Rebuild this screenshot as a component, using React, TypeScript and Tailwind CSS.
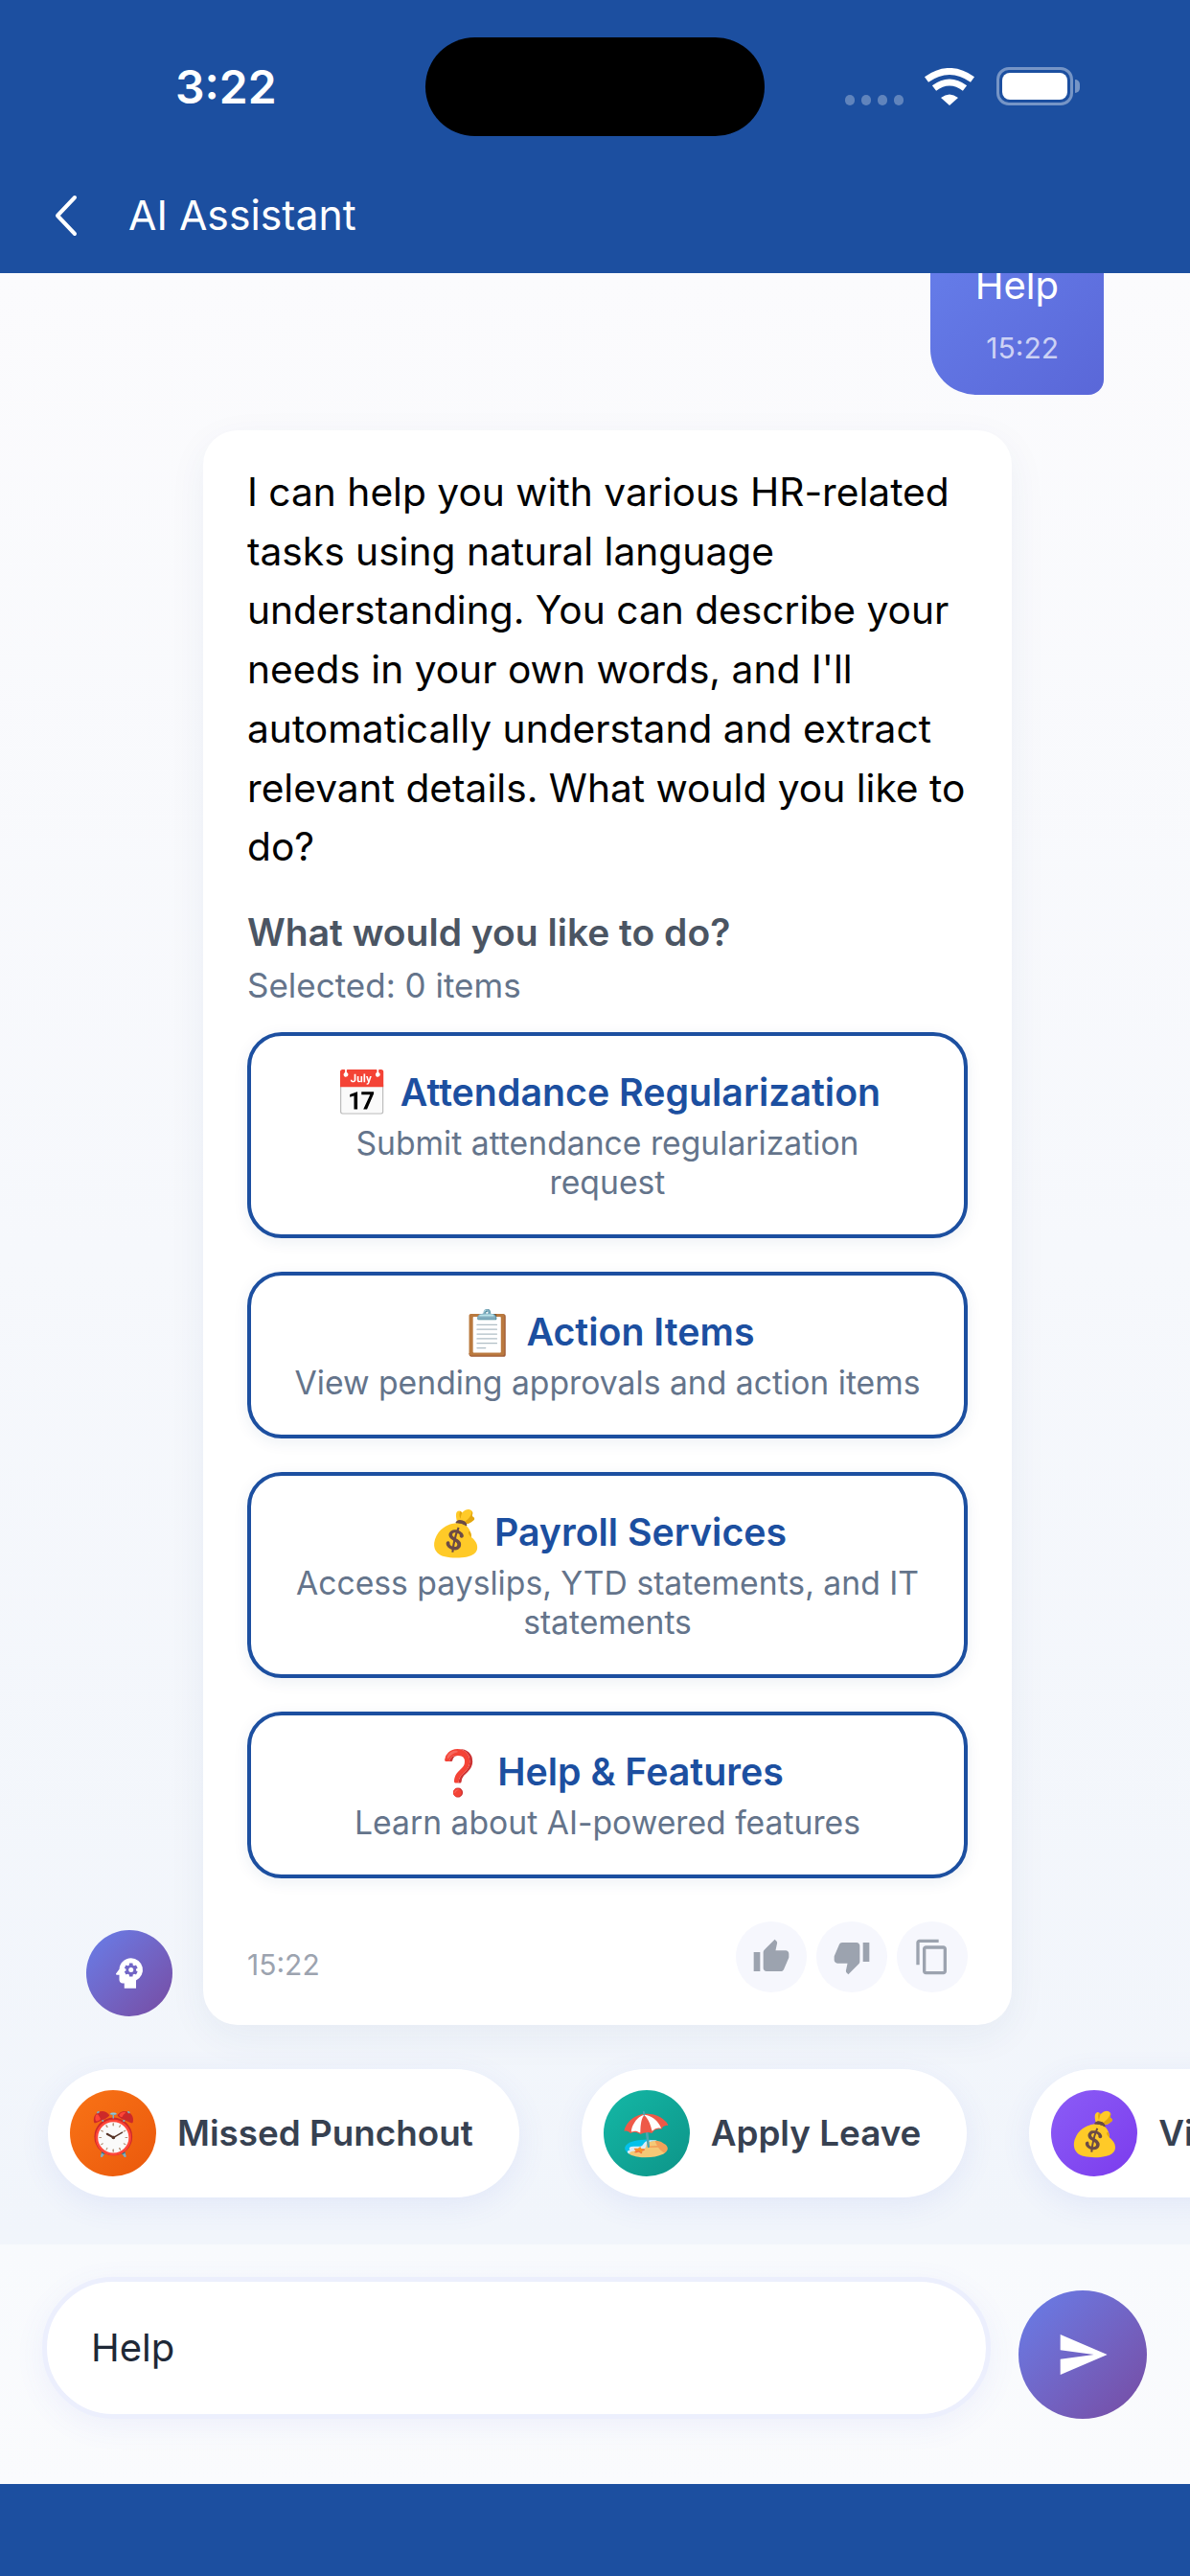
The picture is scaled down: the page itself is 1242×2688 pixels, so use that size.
import React from 'react'
import { MdPsychology, MdThumbUp, MdThumbDown, MdContentCopy, MdSend } from 'react-icons/md'

const options = [
  { emoji: '📅', title: 'Attendance Regularization', desc: 'Submit attendance regularization\nrequest' },
  { emoji: '📋', title: 'Action Items', desc: 'View pending approvals and action items' },
  { emoji: '💰', title: 'Payroll Services', desc: 'Access payslips, YTD statements, and IT statements' },
  { emoji: '❓', title: 'Help & Features', desc: 'Learn about AI-powered features' },
]

const chips = [
  { emoji: '⏰', label: 'Missed Punchout', circle: 'bg-gradient-to-br from-[#f97316] to-[#ea580c]' },
  { emoji: '🏖️', label: 'Apply Leave', circle: 'bg-gradient-to-br from-[#14b8a6] to-[#0d9488]' },
  { emoji: '💰', label: 'View Payslips', circle: 'bg-gradient-to-br from-[#8b5cf6] to-[#7c3aed]' },
]

function StatusIcons() {
  return (
    <div className="flex items-center ml-[84px]">
      <div className="flex gap-[7px] mt-[28px]">
        <span className="w-[10px] h-[11px] rounded-full bg-white/30" />
        <span className="w-[10px] h-[11px] rounded-full bg-white/30" />
        <span className="w-[10px] h-[11px] rounded-full bg-white/30" />
        <span className="w-[10px] h-[11px] rounded-full bg-white/30" />
      </div>
      <svg width="54" height="39" viewBox="0 0 54 39" className="ml-[21px]" fill="none" stroke="white" strokeWidth="7">
        <path d="M3 12 Q27 -5 51 12" />
        <path d="M11 21 Q27 9 43 21" />
        <path d="M27 39 L18 31 Q27 24 36 31 Z" fill="white" stroke="none" />
      </svg>
      <div className="relative ml-[22px] -mt-[1px] w-[80px] h-[40px] rounded-[13px] border-[3px] border-white/40 p-[3px]">
        <div className="w-full h-full rounded-[8px] bg-white" />
        <span className="absolute -right-[10px] top-[10px] w-[5px] h-[14px] rounded-r-full bg-white/40" />
      </div>
    </div>
  )
}

export default function App() {
  return (
    <div className="w-[1242px] h-[2688px] flex flex-col overflow-hidden font-['Inter',sans-serif] bg-[#f5f7fc]">
      <header className="h-[285px] bg-[#1c4fa0] text-white shrink-0">
        <div className="flex items-center pt-[39px] pl-[183px]">
          <div className="w-[261px] text-[48px] font-semibold leading-[103px]">3:22</div>
          <div className="w-[354px] h-[103px] rounded-full bg-black" />
          <StatusIcons />
        </div>
        <div className="flex items-center pl-[57px] mt-[57px]">
          <svg width="24" height="44" viewBox="0 0 24 44" fill="none" stroke="white" strokeWidth="4" strokeLinecap="round" strokeLinejoin="round">
            <path d="M21 3 L3 22 L21 41" />
          </svg>
          <span className="ml-[53px] text-[42.7px] leading-[52px]">AI Assistant</span>
        </div>
      </header>

      <main className="flex-1 min-h-0 overflow-hidden flex flex-col bg-gradient-to-b from-[#fbfbfd] to-[#f1f5fb]">
        <div className="flex justify-end pr-[90px]">
          <div className="w-[181px] -mt-[30px] pt-[19px] pb-[32px] pr-[47px] flex flex-col items-end rounded-bl-[48px] rounded-br-[16px] bg-gradient-to-br from-[#667eea] to-[#5a67d8] text-white">
            <div className="text-[40px] leading-[48px]">Help</div>
            <div className="mt-[24px] text-[30px] leading-[34px] text-white/70">15:22</div>
          </div>
        </div>

        <div className="flex items-end mt-[37px] pl-[90px]">
          <div className="w-[90px] h-[90px] mb-[9px] shrink-0 rounded-full bg-gradient-to-br from-[#667eea] to-[#764ba2] flex items-center justify-center">
            <MdPsychology size={42} color="white" />
          </div>
          <div className="w-[844px] ml-[32px] bg-white rounded-[36px] px-[46px] pt-[34px] pb-[34px] shadow-[0_12px_40px_rgba(30,60,120,0.06)]">
            <p className="text-[40.7px] leading-[61.7px] text-black">
              I can help you with various HR-related tasks using natural language understanding. You can describe your needs in your own words, and I'll automatically understand and extract relevant details. What would you like to do?
            </p>
            <div className="mt-[34px] text-[39px] leading-[48px] font-semibold text-[#4b5563]">What would you like to do?</div>
            <div className="mt-[11px] text-[35px] leading-[40px] text-[#64748b]">Selected: 0 items</div>
            <div className="mt-[29px] flex flex-col gap-[35px]">
              {options.map((o) => (
                <div key={o.title} className="border-4 border-[#1c4fa0] rounded-[36px] px-[42px] pt-[35px] pb-[34px] text-center shadow-[0_4px_16px_rgba(30,60,120,0.08)]">
                  <div className="text-[39.3px] leading-[48px] font-semibold text-[#1c4fa0] flex items-center justify-center gap-[12px]">
                    <span className="text-[46px]">{o.emoji}</span>
                    <span>{o.title}</span>
                  </div>
                  <div className="mt-[8px] text-[33.7px] leading-[41px] text-[#64748b] whitespace-pre-line">{o.desc}</div>
                </div>
              ))}
            </div>
            <div className="mt-[45px] flex items-center justify-between">
              <span className="mt-[16px] text-[30px] leading-[34px] text-[#9ca3af]">15:22</span>
              <div className="flex gap-[10px]">
                <div className="w-[74px] h-[74px] rounded-full bg-[#f6f7fd] flex items-center justify-center"><MdThumbUp size={40} color="#9ca3af" /></div>
                <div className="w-[74px] h-[74px] rounded-full bg-[#f6f7fd] flex items-center justify-center"><MdThumbDown size={40} color="#9ca3af" /></div>
                <div className="w-[74px] h-[74px] rounded-full bg-[#f6f7fd] flex items-center justify-center"><MdContentCopy size={40} color="#9ca3af" /></div>
              </div>
            </div>
          </div>
        </div>

        <div className="flex mt-[46px] pl-[50px] gap-[65px]">
          {chips.map((c) => (
            <div key={c.label} className="shrink-0 h-[134px] flex items-center gap-[22px] pl-[23px] pr-[48px] rounded-full bg-white shadow-[0_8px_32px_rgba(80,100,220,0.09)]">
              <div className={`w-[90px] h-[90px] rounded-full flex items-center justify-center text-[44px] ${c.circle}`}>{c.emoji}</div>
              <span className="text-[36.8px] font-semibold text-[#374151]">{c.label}</span>
            </div>
          ))}
        </div>
      </main>

      <section className="h-[250px] shrink-0 bg-gradient-to-b from-[#f8fafd] to-[#fafbfd] flex items-start pt-[34px] pl-[44px]">
        <div className="w-[990px] h-[148px] rounded-full bg-white border-[5px] border-[#eceffd] flex items-center pl-[46px] text-[40px] text-[#1f2937] shadow-[0_8px_32px_rgba(80,100,220,0.07)]">Help</div>
        <div className="ml-[29px] mt-[14px] w-[134px] h-[134px] rounded-full bg-gradient-to-br from-[#667eea] to-[#764ba2] flex items-center justify-center">
          <MdSend size={56} color="white" />
        </div>
      </section>
      <footer className="h-[96px] shrink-0 bg-[#1c4fa0]" />
    </div>
  )
}
